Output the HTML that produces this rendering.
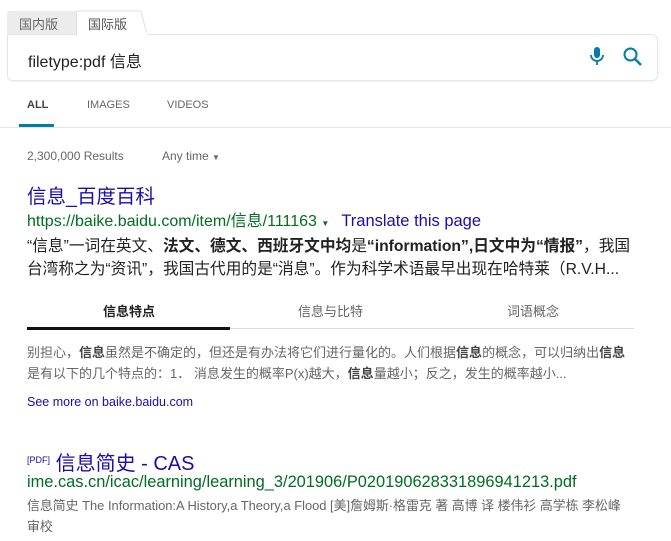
<!DOCTYPE html>
<html><head><meta charset="utf-8"><style>
body{margin:0;width:671px;height:541px;background:#fff;font-family:"Liberation Sans","Noto Sans CJK SC",sans-serif;position:relative;overflow:hidden}
.a{position:absolute;white-space:nowrap}
</style></head><body>
<div class="a" style="left:7px;top:11px;width:72px;height:24px;background:#ececec;border-radius:3px 0 0 0"></div>
<div class="a" style="left:19px;top:14px;font-size:13px;color:#666">国内版</div>
<svg class="a" style="left:76px;top:10px" width="72" height="26"><path d="M0.5 26V3Q0.5 1 2.5 1H65L71 25" fill="#fff" stroke="#e0e0e0"/></svg>
<div class="a" style="left:88px;top:14px;font-size:13px;color:#555">国际版</div>
<div class="a" style="left:7px;top:34px;width:649px;height:45px;border:1px solid #e6e6e6;border-radius:0 6px 6px 6px;box-shadow:0 1px 2px rgba(0,0,0,.05)"></div>
<div class="a" style="left:77px;top:33px;width:70px;height:3px;background:#fff"></div>
<div class="a" style="left:28px;top:48px;font-size:16px;color:#222">filetype:pdf 信息</div>
<svg class="a" style="left:588px;top:46px" width="18" height="22"><rect x="6" y="1" width="6" height="11" rx="3" fill="#007daa"/><path d="M3 9a6 6 0 0 0 12 0M9 15v4" stroke="#007daa" stroke-width="1.8" fill="none"/></svg>
<svg class="a" style="left:622px;top:46px" width="22" height="22"><circle cx="8.5" cy="8.5" r="6" stroke="#007daa" stroke-width="2" fill="none"/><path d="M13 13l6 6" stroke="#007daa" stroke-width="2.4"/></svg>
<div class="a" style="left:27px;top:99px;font-size:11px;color:#444;font-weight:bold">ALL</div>
<div class="a" style="left:87px;top:99px;font-size:11px;color:#666">IMAGES</div>
<div class="a" style="left:167px;top:99px;font-size:11px;color:#666">VIDEOS</div>
<div class="a" style="left:19px;top:124px;width:35px;height:3px;background:#007daa"></div>
<div class="a" style="left:0;top:127px;width:671px;height:1px;background:#e5e5e5"></div>
<div class="a" style="left:27px;top:149px;font-size:12px;color:#666">2,300,000 Results</div>
<div class="a" style="left:162px;top:149px;font-size:12px;color:#666">Any time <span style="font-size:8px">▼</span></div>
<div class="a" style="left:27px;top:180px;font-size:19.5px;color:#1a0dab">信息_百度百科</div>
<div class="a" style="left:27px;top:207px;font-size:16px;color:#006d21">https://baike.baidu.com/item/信息/111163 <span style="font-size:8px">▼</span><span style="color:#1a0dab;margin-left:12px;font-size:16.5px">Translate this page</span></div>
<div class="a" style="left:27px;top:235px;font-size:15.7px;color:#222;line-height:23px">“信息”一词在英文、<b>法文、德文、西班牙文中均</b>是<b>“information”,日文中为“情报”</b>，我国<br>台湾称之为“资讯”，我国古代用的是“消息”。作为科学术语最早出现在哈特莱（R.V.H...</div>
<div class="a" style="left:103px;top:301px;font-size:13px;color:#222;font-weight:bold">信息特点</div>
<div class="a" style="left:298px;top:301px;font-size:13px;color:#666">信息与比特</div>
<div class="a" style="left:507px;top:301px;font-size:13px;color:#666">词语概念</div>
<div class="a" style="left:27px;top:327px;width:203px;height:3px;background:#111"></div>
<div class="a" style="left:230px;top:328px;width:404px;height:1px;background:#ddd"></div>
<div class="a" style="left:27px;top:342px;font-size:13px;color:#666;line-height:21px">别担心，<b style="color:#444">信息</b>虽然是不确定的，但还是有办法将它们进行量化的。人们根据<b style="color:#444">信息</b>的概念，可以归纳出<b style="color:#444">信息</b><br>是有以下的几个特点的：1． 消息发生的概率P(x)越大，<b style="color:#444">信息</b>量越小；反之，发生的概率越小...</div>
<div class="a" style="left:27px;top:395px;font-size:12.5px;color:#1a0dab">See more on baike.baidu.com</div>
<div class="a" style="left:27px;top:447px;font-size:20px;color:#1a0dab"><span style="font-size:9px;vertical-align:7px">[PDF]</span> 信息简史 - CAS</div>
<div class="a" style="left:27px;top:473px;font-size:16.4px;color:#006d21">ime.cas.cn/icac/learning/learning_3/201906/P020190628331896941213.pdf</div>
<div class="a" style="left:27px;top:495px;font-size:12.9px;color:#666;line-height:21px">信息简史 The Information:A History,a Theory,a Flood [美]詹姆斯·格雷克 著 高博 译 楼伟衫 高学栋 李松峰<br>审校</div>
</body></html>
